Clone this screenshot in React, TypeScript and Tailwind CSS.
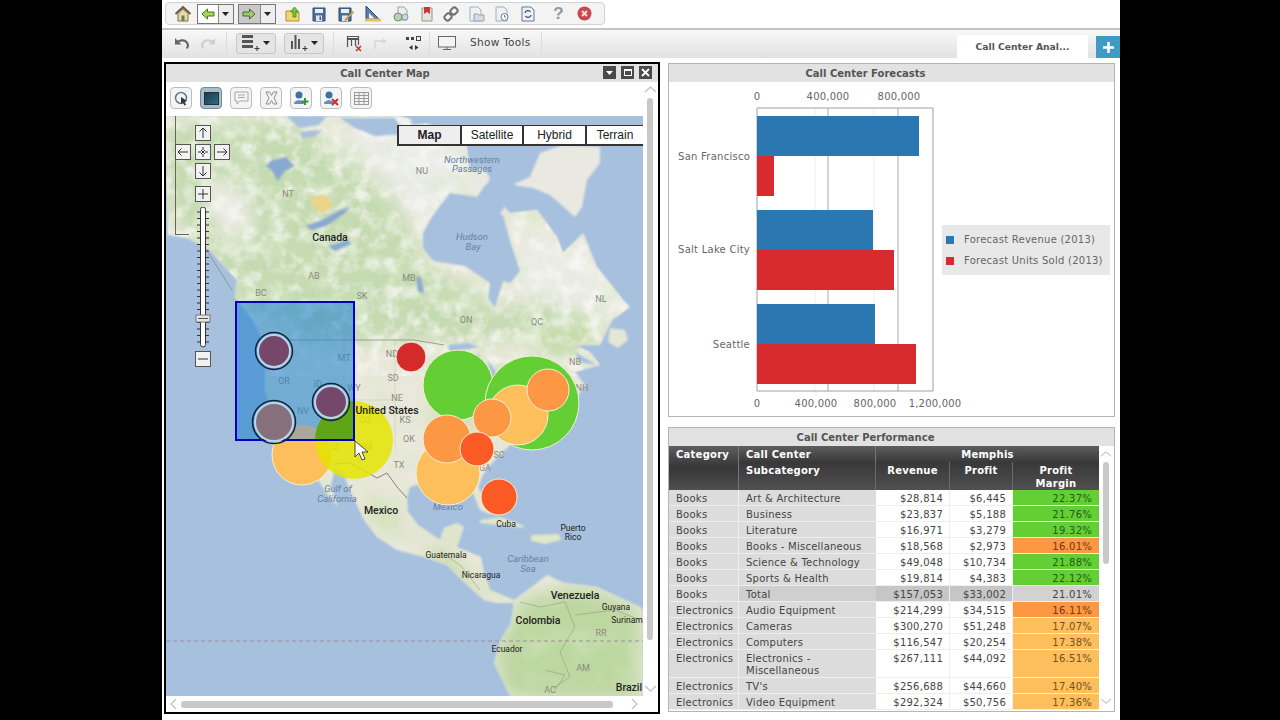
import React from 'react';

const VERDANA = "font-['DejaVu_Sans',Verdana,sans-serif]";

const Home = () => (
  <svg width="18" height="18" viewBox="0 0 18 18">
    <path d="M1.5 9 9 2l7.5 7" fill="none" stroke="#6b5a3a" strokeWidth="2" />
    <path d="M4 8.5V16h10V8.5L9 4z" fill="#e8d9a8" stroke="#7d6f4e" />
    <rect x="7.5" y="10.5" width="3" height="5.5" fill="#6d7f4a" />
  </svg>
);
const ArrowLeftIcon = () => (
  <svg width="14" height="12" viewBox="0 0 14 12">
    <path d="M1 6 6.5 1v3H13v4H6.500v3z" fill="#a8d84f" stroke="#3d7a22" />
  </svg>
);
const ArrowRightIcon = () => (
  <svg width="14" height="12" viewBox="0 0 14 12">
    <path d="M13 6 7.500 1v3H1v4h6.500v3z" fill="#a4c86a" stroke="#44692e" />
  </svg>
);
const Caret = ({ color = '#222' }: { color?: string }) => (
  <svg width="7" height="4" viewBox="0 0 7 4">
    <path d="M0 0h7L3.500 4z" fill={color} />
  </svg>
);
const FolderUp = () => (
  <svg width="16" height="16" viewBox="0 0 16 16">
    <path d="M1 5h5l1 1.500h7V15H1z" fill="#f1d66f" stroke="#b29434" />
    <path d="M9.500 1 13.500 5.500H11V11H8V5.500H5.500z" fill="#7cc242" stroke="#3f7f22" strokeWidth=".7" />
  </svg>
);
const Save = () => (
  <svg width="16" height="16" viewBox="0 0 16 16">
    <path d="M2 2h12v13H2z" fill="#4a7099" stroke="#2f4d6e" />
    <rect x="4" y="3" width="8" height="4" fill="#e8eef4" />
    <rect x="5" y="9.500" width="6" height="5.500" fill="#dfe5ec" />
    <rect x="8.500" y="10.500" width="1.500" height="3.500" fill="#33597f" />
  </svg>
);
const SaveAs = () => (
  <svg width="17" height="16" viewBox="0 0 17 16">
    <path d="M2 2h12v13H2z" fill="#4a7099" stroke="#2f4d6e" />
    <rect x="4" y="3" width="8" height="4" fill="#e8eef4" />
    <rect x="5" y="9.500" width="6" height="5.500" fill="#dfe5ec" />
    <path d="m15.500 5-6 7-1.500 2.500 2.500-1.500 6-6.500z" fill="#e9b949" stroke="#8d6a1c" strokeWidth=".6" />
  </svg>
);
const RulerIcon = () => (
  <svg width="18" height="17" viewBox="0 0 18 17">
    <path d="M2 1v13h13z" fill="#5b7db0" stroke="#2d4a78" />
    <path d="M5 8v5.500h5.500z" fill="#f2f2f2" />
    <rect x="1" y="13.500" width="16" height="3" fill="#e6c25a" />
  </svg>
);
const Recycle = () => (
  <svg width="18" height="16" viewBox="0 0 18 16">
    <path d="M6 1h6l3 3v10H6z" fill="#e8ecf0" stroke="#9aa3ad" />
    <circle cx="6" cy="11" r="4" fill="#b9cfb0" stroke="#7a8f76" />
    <circle cx="13" cy="11" r="3" fill="#cfd6dc" stroke="#8d99a5" />
  </svg>
);
const Bookmark = () => (
  <svg width="14" height="16" viewBox="0 0 14 16">
    <path d="M2 2h10v13H2z" fill="#e6e2dc" stroke="#9a948c" />
    <path d="M4 1h6v7L7 6 4 8z" fill="#c8373a" />
  </svg>
);
const Chain = () => (
  <svg width="16" height="16" viewBox="0 0 16 16" fill="none" stroke="#6c7075" strokeWidth="2">
    <rect x="8" y="1.500" width="6" height="7" rx="2.500" transform="rotate(45 11 5)" />
    <rect x="2" y="7.500" width="6" height="7" rx="2.500" transform="rotate(45 5 11)" />
  </svg>
);
const PageFolder = () => (
  <svg width="17" height="16" viewBox="0 0 17 16">
    <path d="M2 1h8l3 3v11H2z" fill="#eef1f4" stroke="#a6adb5" />
    <path d="M6 8h4l1 1h5v6H6z" fill="#d5dbe2" stroke="#99a2ac" />
  </svg>
);
const PageClock = () => (
  <svg width="16" height="16" viewBox="0 0 16 16">
    <path d="M2 1h8l3 3v11H2z" fill="#eef1f4" stroke="#a6adb5" />
    <circle cx="10.500" cy="11" r="3.500" fill="#fff" stroke="#6b7a8c" />
    <path d="M10.500 9v2h1.500" stroke="#6b7a8c" fill="none" />
  </svg>
);
const PageRefresh = () => (
  <svg width="14" height="16" viewBox="0 0 14 16">
    <path d="M1 1h9l3 3v11H1z" fill="#eef1f4" stroke="#6e7882" />
    <path d="M4 7a3 3 0 0 1 5.500-1M10 9a3 3 0 0 1-5.500 1" stroke="#2d4f75" strokeWidth="1.300" fill="none" />
  </svg>
);
const HelpIcon = () => (
  <span className="font-['Liberation_Sans',sans-serif] text-[17px] font-bold leading-none text-[#8f9aa8]">?</span>
);
const CloseIcon = () => (
  <svg width="15" height="15" viewBox="0 0 15 15">
    <circle cx="7.500" cy="7.500" r="7" fill="#c8494d" />
    <path d="m5 5 5 5m0-5-5 5" stroke="#f5dcdc" strokeWidth="2" />
  </svg>
);
const Undo = ({ color }: { color: string }) => (
  <svg width="16" height="13" viewBox="0 0 16 13" fill="none">
    <path d="M3 5.500c3-3.500 10-3 11 3l-1 3" stroke={color} strokeWidth="2.200" />
    <path d="M1 1v6.500h6.500z" fill={color} />
  </svg>
);
const Redo = ({ color }: { color: string }) => (
  <svg width="16" height="13" viewBox="0 0 16 13" fill="none">
    <path d="M13 5.500c-3-3.500-10-3-11 3l1 3" stroke={color} strokeWidth="2.200" />
    <path d="M15 1v6.500H8.500z" fill={color} />
  </svg>
);
const RowsAdd = () => (
  <svg width="20" height="18" viewBox="0 0 20 18">
    <rect x="1" y="1" width="11" height="3" fill="#555" />
    <rect x="1" y="6" width="11" height="3" fill="#555" />
    <rect x="1" y="11" width="11" height="3" fill="#555" />
    <path d="M16 12v5M13.500 14.500h5" stroke="#333" />
  </svg>
);
const BarsAdd = () => (
  <svg width="20" height="18" viewBox="0 0 20 18">
    <rect x="2" y="7" width="2" height="8" fill="#555" />
    <rect x="5.500" y="1" width="2" height="14" fill="#555" />
    <rect x="9" y="5" width="2" height="10" fill="#555" />
    <path d="M16 12v5M13.500 14.500h5" stroke="#333" />
  </svg>
);
const TableRemove = () => (
  <svg width="17" height="17" viewBox="0 0 17 17">
    <path d="M1 1.500h11M1.500 1v11M5.500 3v8M9.500 3v8M12.500 1v9" stroke="#555" strokeWidth="1.200" fill="none" />
    <path d="M1 4h11" stroke="#555" strokeWidth="2" />
    <path d="m10 11 5 5m0-5-5 5" stroke="#cf2e2e" strokeWidth="1.600" />
  </svg>
);
const Route = () => (
  <svg width="16" height="14" viewBox="0 0 16 14" fill="none" stroke="#d4d4d4" strokeWidth="1.300">
    <path d="M2 13V5h10M10 3l2.500 2L10 7" />
  </svg>
);
const Swap = () => (
  <svg width="17" height="16" viewBox="0 0 17 16">
    <rect x="1" y="2" width="3" height="3" fill="#444" />
    <rect x="6" y="2" width="3" height="3" fill="#444" />
    <rect x="11.500" y="1.500" width="4" height="4" fill="none" stroke="#444" />
    <path d="M7.500 10v5L4 12.500zM10 10v5l3.500-2.500z" fill="#333" />
  </svg>
);
const Monitor = () => (
  <svg width="18" height="15" viewBox="0 0 18 15">
    <rect x=".5" y=".5" width="17" height="10.500" fill="#f4f4f4" stroke="#666" />
    <path d="M9 11v2M5 13.500h8" stroke="#666" />
  </svg>
);

const Sep = () => <div className="mx-[1px] h-[22px] w-px bg-[#dcdcdc]" />;

// top icon strip, centered in fixed slots so they line up with the picture
const slot = (node: React.ReactNode, w: string) => (
  <div className={`flex items-center justify-center ${w}`}>{node}</div>
);

const TopBar = () => (
  <div className="flex h-[28px] items-start pl-[3px] pt-[2px]">
    <div className="flex h-[23px] w-[440px] items-center rounded-sm border border-[#d2d2d2] bg-[#f3f3f3] pl-[4px]">
      {slot(<Home />, 'w-[26px]')}
      <div className="ml-[1px] flex h-[20px] w-[37px] border border-[#777]">
        <div className="flex w-[21px] items-center justify-center bg-white"><ArrowLeftIcon /></div>
        <div className="flex w-[16px] items-center justify-center border-l border-[#888] bg-[#eee]"><Caret /></div>
      </div>
      <div className="ml-[4px] flex h-[20px] w-[38px] border border-[#777]">
        <div className="flex w-[22px] items-center justify-center bg-[#c9c9c9]"><ArrowRightIcon /></div>
        <div className="flex w-[16px] items-center justify-center border-l border-[#888] bg-[#eee]"><Caret /></div>
      </div>
      {slot(<FolderUp />, 'ml-[4px] w-[26px]')}
      {slot(<Save />, 'w-[26px]')}
      {slot(<SaveAs />, 'w-[26px]')}
      {slot(<RulerIcon />, 'ml-[1px] w-[28px]')}
      {slot(<Recycle />, 'w-[28px]')}
      {slot(<Bookmark />, 'w-[23px]')}
      {slot(<Chain />, 'w-[26px]')}
      {slot(<PageFolder />, 'w-[25px]')}
      {slot(<PageClock />, 'w-[26px]')}
      {slot(<PageRefresh />, 'w-[26px]')}
      {slot(<HelpIcon />, 'ml-[3px] w-[29px]')}
      {slot(<CloseIcon />, 'w-[22px]')}
    </div>
  </div>
);

const SplitBtn = ({ children }: { children: React.ReactNode }) => (
  <div className="flex h-[21px] w-[40px] items-center justify-between rounded-[3px] border border-[#c8c8c8] bg-[#e4e4e4] pl-[4px] pr-[5px]">
    {children}
    <Caret />
  </div>
);

const SecondBar = () => (
  <div className="flex h-[30px] items-center border-t-2 border-[#c4c4c4] bg-gradient-to-b from-[#f8f8f8] to-[#e2e2e2] pb-[2px] pl-[11px]">
    <div className="flex w-[18px] justify-center"><Undo color="#666" /></div>
    <div className="ml-[8px] flex w-[18px] justify-center"><Redo color="#d0d0d0" /></div>
    <div className="ml-[8px] mr-[8px]"><Sep /></div>
    <SplitBtn><RowsAdd /></SplitBtn>
    <div className="ml-[8px]"><SplitBtn><BarsAdd /></SplitBtn></div>
    <div className="ml-[8px] mr-[11px]"><Sep /></div>
    <TableRemove />
    <div className="ml-[10px]"><Route /></div>
    <div className="ml-[16px]"><Swap /></div>
    <div className="ml-[6px] mr-[7px]"><Sep /></div>
    <Monitor />
    <span className={`ml-[14px] text-[10.5px] tracking-[0.3px] text-[#444] ${VERDANA}`}>Show Tools</span>
    <div className="ml-[9px]"><Sep /></div>
    <div className="flex-1" />
    <div className={`mt-[8px] flex h-[24px] w-[131px] items-center justify-center bg-white text-[9.2px] font-bold text-[#555] ${VERDANA}`}>Call Center Anal...</div>
    <div className="ml-[8px] mt-[8px] flex h-[22px] w-[24px] items-center justify-center bg-[#3f9bc4]">
      <svg width="11" height="11" viewBox="0 0 11 11"><path d="M5.500 0v11M0 5.500h11" stroke="#fff" strokeWidth="2.500" /></svg>
    </div>
  </div>
);

const ToolBtn = ({ children, active }: { children: React.ReactNode; active?: boolean }) => (
  <div className={`flex h-[22px] w-[22px] items-center justify-center rounded-[4px] border ${active ? 'border-[#6f8b9c] bg-[#a9bcc8]' : 'border-[#bdbdbd] bg-[#f4f4f4]'}`}>
    {children}
  </div>
);

const MapTools = () => (
  <div className="flex h-[33px] items-center gap-[8px] pl-[4px]">
    <ToolBtn>
      <svg width="15" height="15" viewBox="0 0 15 15" fill="none">
        <circle cx="7" cy="7" r="5.500" stroke="#5d7b91" strokeWidth="1.500" />
        <path d="M7 6l6 4-2.500.5L12 14l-1.500.5-1.500-3L7 13z" fill="#333" />
      </svg>
    </ToolBtn>
    <ToolBtn active>
      <div className="h-[13px] w-[15px] border border-[#22333f] bg-gradient-to-br from-[#1d3a4d] to-[#2a6e80]" />
    </ToolBtn>
    <ToolBtn>
      <svg width="15" height="14" viewBox="0 0 15 14" fill="none" stroke="#a8a8a8">
        <path d="M1 1h13v9H6l-3 3v-3H1z" />
        <path d="M4 4h7M4 6.500h7" />
      </svg>
    </ToolBtn>
    <ToolBtn>
      <svg width="13" height="14" viewBox="0 0 13 14" fill="none" stroke="#8b8b8b">
        <path d="M1 1h3.500l2 3.500 2-3.500H12L9 7l3 6H8.500l-2-3.500-2 3.500H1l3-6z" />
      </svg>
    </ToolBtn>
    <ToolBtn>
      <svg width="16" height="16" viewBox="0 0 16 16">
        <circle cx="6" cy="5" r="3.500" fill="#3d6fa3" />
        <path d="M1 14c0-5 10-5 10 0z" fill="#5f8fc0" />
        <path d="M12 8v7M8.500 11.500h7" stroke="#2f9a3a" strokeWidth="2" />
      </svg>
    </ToolBtn>
    <ToolBtn>
      <svg width="16" height="16" viewBox="0 0 16 16">
        <circle cx="6" cy="5" r="3.500" fill="#3d6fa3" />
        <path d="M1 14c0-5 10-5 10 0z" fill="#5f8fc0" />
        <path d="m9 9 6 6m0-6-6 6" stroke="#d02c2c" strokeWidth="2" />
      </svg>
    </ToolBtn>
    <ToolBtn>
      <svg width="15" height="13" viewBox="0 0 15 13" fill="none" stroke="#9a9a9a">
        <rect x=".5" y=".5" width="14" height="12" />
        <path d="M.5 3.500h14M.5 6.500h14M.5 9.500h14M5 .5v12M10 .5v12" />
      </svg>
    </ToolBtn>
  </div>
);

const NavBtn = ({ children, className = '' }: { children: React.ReactNode; className?: string }) => (
  <div className={`absolute flex h-[16px] w-[16px] items-center justify-center border border-[#555] bg-[#f2f2f2] ${className}`}>
    <svg width="12" height="12" viewBox="0 0 12 12" fill="none" stroke="#333">{children}</svg>
  </div>
);

const NavControl = () => (
  <>
    <div className="absolute left-[9px] top-0 h-[119px] w-[14px] border-b border-l border-[#666]" />
    <NavBtn className="left-[29px] top-[9px]"><path d="M6 11V1M2.500 4.500 6 1l3.500 3.500" /></NavBtn>
    <NavBtn className="left-[9px] top-[28px]"><path d="M11 6H1M4.500 2.500 1 6l3.500 3.500" /></NavBtn>
    <NavBtn className="left-[29px] top-[28px]"><path d="M6 1v3M6 8v3M1 6h3M8 6h3M4 4l4 4M8 4l-4 4" /></NavBtn>
    <NavBtn className="left-[48px] top-[28px]"><path d="M1 6h10M7.500 2.500 11 6l-3.500 3.500" /></NavBtn>
    <NavBtn className="left-[29px] top-[47px]"><path d="M6 1v10M2.500 7.500 6 11l3.500-3.500" /></NavBtn>
    <NavBtn className="left-[29px] top-[70px]"><path d="M6 1v10M1 6h10" /></NavBtn>
    <svg className="absolute left-[29px] top-[91px]" width="16" height="141" viewBox="0 0 16 141">
      {Array.from({ length: 21 }).map((_, i) => (
        <path key={i} d={`M2 ${5 + i * 6.500}h12`} stroke="#333" strokeWidth="1" />
      ))}
      <rect x="5.500" y="0" width="5" height="140" rx="2.500" fill="#fff" stroke="#333" />
      <rect x="1" y="108" width="14" height="7" fill="#e6e6e6" stroke="#777" />
      <path d="M3 111.500h10" stroke="#555" />
    </svg>
    <NavBtn className="left-[29px] top-[235px]"><path d="M1 6h10" /></NavBtn>
  </>
);

const MAP_TYPES = ['Map', 'Satellite', 'Hybrid', 'Terrain'];

const MapTypeBar = () => (
  <div className="absolute left-[231px] top-[9px] grid h-[19px] w-[246px] grid-cols-[63px_62px_63px_58px] font-['Liberation_Sans',sans-serif] text-[12px] text-[#222]">
    {MAP_TYPES.map((t, i) => (
      <div
        key={t}
        className={`flex items-center justify-center border-b-2 border-l-2 border-t border-[#333] ${i === 0 ? 'bg-[#eeeeee] font-bold' : 'bg-white'}`}
      >
        {t}
      </div>
    ))}
  </div>
);

type MapLabel = { x: number; y: number; t: string; k: 'major' | 'country' | 'small' | 'state' | 'sea' };
const LABELS: MapLabel[] = [
  { x: 330, y: 241, t: 'Canada', k: 'country' },
  { x: 381, y: 514, t: 'Mexico', k: 'country' },
  { x: 506, y: 527, t: 'Cuba', k: 'small' },
  { x: 573, y: 531, t: 'Puerto', k: 'small' },
  { x: 573, y: 540, t: 'Rico', k: 'small' },
  { x: 446, y: 558, t: 'Guatemala', k: 'small' },
  { x: 481, y: 578, t: 'Nicaragua', k: 'small' },
  { x: 575, y: 599, t: 'Venezuela', k: 'major' },
  { x: 538, y: 624, t: 'Colombia', k: 'major' },
  { x: 616, y: 610, t: 'Guyana', k: 'small' },
  { x: 627, y: 623, t: 'Surinam', k: 'small' },
  { x: 507, y: 652, t: 'Ecuador', k: 'small' },
  { x: 629, y: 691, t: 'Brazil', k: 'major' },
  { x: 288, y: 197, t: 'NT', k: 'state' },
  { x: 422, y: 174, t: 'NU', k: 'state' },
  { x: 409, y: 281, t: 'MB', k: 'state' },
  { x: 601, y: 302, t: 'NL', k: 'state' },
  { x: 314, y: 279, t: 'AB', k: 'state' },
  { x: 261, y: 296, t: 'BC', k: 'state' },
  { x: 362, y: 299, t: 'SK', k: 'state' },
  { x: 466, y: 323, t: 'ON', k: 'state' },
  { x: 537, y: 325, t: 'QC', k: 'state' },
  { x: 575, y: 365, t: 'NB', k: 'state' },
  { x: 582, y: 391, t: 'NH', k: 'state' },
  { x: 344, y: 361, t: 'MT', k: 'state' },
  { x: 284, y: 384, t: 'OR', k: 'state' },
  { x: 318, y: 387, t: 'ID', k: 'state' },
  { x: 354, y: 391, t: 'WY', k: 'state' },
  { x: 303, y: 414, t: 'NV', k: 'state' },
  { x: 365, y: 423, t: 'CO', k: 'state' },
  { x: 397, y: 401, t: 'NE', k: 'state' },
  { x: 393, y: 381, t: 'SD', k: 'state' },
  { x: 392, y: 357, t: 'ND', k: 'state' },
  { x: 405, y: 423, t: 'KS', k: 'state' },
  { x: 409, y: 442, t: 'OK', k: 'state' },
  { x: 399, y: 468, t: 'TX', k: 'state' },
  { x: 499, y: 458, t: 'SC', k: 'state' },
  { x: 485, y: 471, t: 'GA', k: 'state' },
  { x: 365, y: 450, t: 'NM', k: 'state' },
  { x: 334, y: 450, t: 'AZ', k: 'state' },
  { x: 583, y: 671, t: 'AM', k: 'state' },
  { x: 550, y: 693, t: 'AC', k: 'state' },
  { x: 601, y: 636, t: 'RR', k: 'state' },
  { x: 472, y: 163, t: 'Northwestern', k: 'sea' },
  { x: 472, y: 172, t: 'Passages', k: 'sea' },
  { x: 472, y: 240, t: 'Hudson', k: 'sea' },
  { x: 473, y: 250, t: 'Bay', k: 'sea' },
  { x: 338, y: 492, t: 'Gulf of', k: 'sea' },
  { x: 337, y: 502, t: 'California', k: 'sea' },
  { x: 528, y: 562, t: 'Caribbean', k: 'sea' },
  { x: 528, y: 572, t: 'Sea', k: 'sea' },
  { x: 448, y: 510, t: 'Mexico', k: 'sea' },
];

const labelClass: Record<MapLabel['k'], string> = {
  country: "font-['Roboto',sans-serif] text-[10.500px] font-medium fill-[#222]",
  major: "font-['Roboto',sans-serif] text-[10.500px] font-medium fill-[#222]",
  small: "font-['Roboto',sans-serif] text-[8.500px] fill-[#222]",
  state: "font-['Roboto',sans-serif] text-[9px] fill-[#8a8a80]",
  sea: "font-['Roboto',sans-serif] text-[9.500px] italic fill-[#66809f]",
};

const Bubble = ({ x, y, r, fill }: { x: number; y: number; r: number; fill: string }) => (
  <circle cx={x} cy={y} r={r} fill={fill} stroke="#f4f0d8" strokeWidth="1" />
);

const Selected = ({ x, y, r, fill }: { x: number; y: number; r: number; fill: string }) => (
  <g>
    <circle cx={x} cy={y} r={r} fill={fill} stroke="#b5d5ea" strokeWidth="2" />
    <circle cx={x} cy={y} r={r + 2.500} fill="none" stroke="#14213d" strokeWidth="1.500" />
  </g>
);

const LAND =
  'M165 116H400l65 19 5 35 40 43 27-3 20 27 6 16 20-20 14 34 26 33 7 7-18 13-12 25h-25l15 7 10 13-25 7 10 13-10 15-30 25-20 5-20 20-15 15-7 10-5 12 10 18 4 10-12-5-10-25-18-2-24-1-18 5-3 11 1 14 10 13 22 15 4-12 13-5 7 4-7 20 24 10 3 15 6 18 24 10 23-17 10-8 17 8 33 4 43 20 3 3v87H511l-17-34 7-23 10-17 3-20h-17l-13-3-20-18-17-17-23-8-27-7-20-13-13-17-12-25-9-22-8-5-4 17 7 22-10-12-10-15-5-8-20-17-15-25-7-20-6-20v-45l-12-25-18-23 2-17-27-30-23-12-19-3z';

const MapCanvas = () => (
  <svg className="absolute inset-0" width="477" height="581" viewBox="166 116 477 581">
    <defs>
      <filter id="soft"><feGaussianBlur stdDeviation="1.100" /></filter>
      <filter id="softer"><feGaussianBlur stdDeviation="9" /></filter>
      {/* terrain mottling */}
      <filter id="mottleWhite" x="0" y="0" width="100%" height="100%">
        <feTurbulence type="fractalNoise" baseFrequency="0.07" numOctaves="4" seed="7" />
        <feColorMatrix values="0 0 0 0 .96  0 0 0 0 .96  0 0 0 0 .94  2.600 0 0 0 -1.050" />
      </filter>
      <filter id="mottleGreen" x="0" y="0" width="100%" height="100%">
        <feTurbulence type="fractalNoise" baseFrequency="0.035" numOctaves="3" seed="3" />
        <feColorMatrix values="0 0 0 0 .66  0 0 0 0 .8  0 0 0 0 .55  0 2.200 0 0 -.95" />
      </filter>
      <clipPath id="landClip"><path d={LAND} /></clipPath>
      <clipPath id="boxClip"><rect x="237" y="303" width="116" height="136" /></clipPath>
    </defs>
    <rect x="166" y="116" width="477" height="581" fill="#a7c0de" />
    <g filter="url(#soft)">
      <path d={LAND} fill="#e9e8da" />
    </g>
    <g clipPath="url(#landClip)">
      <g filter="url(#softer)">
        <path d="M166 125l120-5 40 20 70 60 30 65 40 20 30 25 60-10 45 30-20 15-60-10-40 10-50-5-130 5-70-50-30-50-35-40z" fill="#c4dab0" />
        <path d="M205 175l35 12 15 40-20 20-25-35z" fill="#f0eee8" />
        <path d="M345 125l120 10 0 70-50 10-35-50-30-25z" fill="#ececea" />
        <path d="M515 215l80 50 35 45-45 5-60-20z" fill="#ecece6" />
        <path d="M530 330l55-20 20 20-30 25-30 5z" fill="#c6dbaa" />
        <path d="M440 365l30 5 60-5 15 25-50 30-40 25-25-30z" fill="#d3e2bb" />
        <path d="M420 545l30 10 20 25 30 20-30-10-30-20zM445 530l15-5-5 20z" fill="#bfd9a2" />
        <path d="M360 495l30 10 20 30-30-5z" fill="#d2e0b6" />
        <path d="M520 600l60-15 60 25v90H505l-10-45z" fill="#bdd7a0" />
      </g>
      <rect x="166" y="116" width="477" height="260" filter="url(#mottleWhite)" opacity=".75" />
      <rect x="166" y="116" width="477" height="581" filter="url(#mottleGreen)" opacity=".45" />
      <path d="M310 197l14-3 9 10-8 9-10-3z" fill="#ead48a" filter="url(#soft)" />
    </g>
    <g filter="url(#soft)">
      <path d="M512 185l18-8 10-24 23-8 37 2v16l-13 17-5 27-7 10-25-22-17-7z" fill="#e9e9e2" />
      <path d="M470 172l12-6 8 12-6 14-14-2z" fill="#e9e9e2" />
      <path d="M610 328l15 2 3 10-10 8-10-6z" fill="#e4e6d6" />
      <path d="M480 520l20-3 22 8 3 3-20-2-25-3zM531 535l28-1 2 6-16 4-14-3z" fill="#dfe7c8" />
      <path d="M423 233l10-18 17-22 27 4 13 18h13l7 26 10 30-10 12-7-2-8 27-7-10 2-15-25-17-32-5-10-13z" fill="#a7c0de" />
      <path d="M470 140l40-2 5 47-15 30h-10l-13-18 8-12 13-5-8-15-15 5z" fill="#a7c0de" />
      <path d="M287 116h40l-8 9-20 3zM340 118h55l10 16-30 2-20-8zM410 116h18l-4 8-12 1zM535 116h20l-8 10-12-2zM300 132l22-2-8 7-12 1z" fill="#a7c0de" />
    </g>
    <g filter="url(#soft)" fill="#8aa9d0">
      <path d="M272 160l14-3 8 9-10 6-6 9-6-10-6-5z" />
      <path d="M306 226l18-7 16-9 10-3-6 7-18 12-14 4z" />
      <path d="M328 246l20-6 3 4-16 7zM416 276l5 2 3 16-6-3z" />
      <path d="M448 345l20-2 12 4-18 3-12 3zM478 352l7 20-6 6-3-16zM487 360l8 10 5 15-8-8zM500 383l18-8-2 5-14 6z" fill="#a7c0de" />
      <path d="M575 352l22 13-18-3z" fill="#a7c0de" />
    </g>
    <g fill="none" stroke="#8d8a7c" strokeWidth=".8">
      <path d="M200 240l32 50M264 340h150l30 5" />
      <path d="M333 464l17-1 13 7 14 8 10-5 10 14 10 11" stroke="#6a675a" />
      <path d="M520 602l20 5 25-5 10 25-15 25 10 25-15 10M575 615l40-5 25 10M555 690l10-15-20-5" strokeOpacity=".6" />
      <path d="M445 555l15 10 20 25" strokeOpacity=".6" />
      <path d="M344 340v60M395 340v110M310 400h90" strokeOpacity=".25" />
    </g>
    <path d="M166 641H643" stroke="#9d8f98" strokeWidth="1" strokeDasharray="4 3" />
    {LABELS.map((l) => (
      <text key={l.t + l.x} x={l.x} y={l.y} textAnchor="middle" className={labelClass[l.k]}>{l.t}</text>
    ))}
    <Bubble x={458} y={385} r={35} fill="#63cf35" />
    <Bubble x={532} y={403} r={47} fill="#63cf35" />
    <Bubble x={518} y={415} r={30} fill="#fdbe5c" />
    <Bubble x={548} y={390} r={21} fill="#fc9744" />
    <Bubble x={492} y={418} r={19} fill="#fc9744" />
    <Bubble x={448} y={473} r={32} fill="#fdbe5c" />
    <Bubble x={447} y={439} r={24} fill="#fc9744" />
    <Bubble x={477} y={449} r={17} fill="#fc5a24" />
    <Bubble x={499} y={497} r={18} fill="#fc5a24" />
    <Bubble x={411} y={357} r={15} fill="#d42a2a" />
    <Bubble x={302} y={455} r={30} fill="#fdbe5c" />
    <circle cx={354} cy={440} r={39} fill="#e4e400" opacity=".85" />
    <rect x="236" y="302" width="118" height="138" fill="#2685d0" fillOpacity=".6" stroke="#0000c4" strokeWidth="2" />
    <g clipPath="url(#boxClip)">
      <circle cx={302} cy={455} r={30} fill="#aaa79c" />
      <circle cx={354} cy={440} r={39} fill="#5fa516" />
    </g>
    <Selected x={274} y={351} r={16} fill="#75476b" />
    <Selected x={331} y={402} r={16} fill="#75476b" />
    <Selected x={274} y={422} r={19} fill="#86707c" />
    <text x={387} y={414} textAnchor="middle" className={labelClass.country}>United States</text>
    <path d="M355 441v16l4-4 3 7 3-1-3-7h6z" fill="#fff" stroke="#222" strokeWidth=".8" />
  </svg>
);

const MapPanel = () => (
  <div className="flex h-[652px] w-[496px] flex-col border-2 border-black bg-white">
    <div className={`relative flex h-[18px] items-center justify-center bg-[#e2e2e2] pr-[54px] text-[10px] font-bold text-[#555] ${VERDANA}`}>
      Call Center Map
      <div className="absolute right-[6px] top-[2px] flex gap-[5px]">
        <div className="flex h-[13px] w-[13px] items-center justify-center bg-[#4a4a4a]"><Caret color="#fff" /></div>
        <div className="flex h-[13px] w-[13px] items-center justify-center bg-[#4a4a4a]"><div className="h-[7px] w-[8px] border border-t-2 border-white" /></div>
        <div className="flex h-[13px] w-[13px] items-center justify-center bg-[#4a4a4a]">
          <svg width="9" height="9" viewBox="0 0 9 9"><path d="m1 1 7 7m0-7-7 7" stroke="#fff" strokeWidth="1.800" /></svg>
        </div>
      </div>
    </div>
    <div className="flex min-h-0 flex-1">
      <div className="flex w-[477px] flex-col">
        <MapTools />
        <div className="relative mt-[1px] h-[581px] overflow-hidden">
          <MapCanvas />
          <NavControl />
          <MapTypeBar />
        </div>
      </div>
      <div className="relative flex-1">
        <svg className="absolute left-[1px] top-[4px]" width="13" height="7" viewBox="0 0 13 7" fill="none"><path d="m1 6 5.500-5L12 6" stroke="#c8c8c8" strokeWidth="1.500" /></svg>
        <div className="absolute bottom-[56px] left-[4px] top-[16px] w-[6px] rounded-[3px] bg-[#c8c8c8]" />
        <svg className="absolute bottom-[4px] left-[1px]" width="13" height="7" viewBox="0 0 13 7" fill="none"><path d="m1 1 5.500 5L12 1" stroke="#c8c8c8" strokeWidth="1.500" /></svg>
      </div>
    </div>
    <div className="flex h-[16px] items-center pl-[4px]">
      <svg width="7" height="12" viewBox="0 0 7 12" fill="none"><path d="M6 1 1 6l5 5" stroke="#c8c8c8" strokeWidth="1.500" /></svg>
      <div className="ml-[4px] h-[7px] w-[432px] rounded-[3px] bg-[#c8c8c8]" />
      <svg className="ml-[18px]" width="7" height="12" viewBox="0 0 7 12" fill="none"><path d="m1 1 5 5-5 5" stroke="#c8c8c8" strokeWidth="1.500" /></svg>
    </div>
  </div>
);

const ForecastChart = () => (
  <svg className={`shrink-0 overflow-visible ${VERDANA}`} width="273" height="335" viewBox="669 82 273 335">
    <path d="M815 108v283M874 108v283" stroke="#eeeeee" />
    <path d="M828 108v283M898 108v283" stroke="#a8a8a8" />
    <path d="M757 391V108H933V391H757" fill="none" stroke="#a0a0a0" />
    <rect x="757" y="116" width="162" height="40" fill="#2b77b2" />
    <rect x="757" y="156" width="17" height="40" fill="#d72b30" />
    <rect x="757" y="210" width="116" height="40" fill="#2b77b2" />
    <rect x="757" y="250" width="137" height="40" fill="#d72b30" />
    <rect x="757" y="304" width="118" height="40" fill="#2b77b2" />
    <rect x="757" y="344" width="159" height="40" fill="#d72b30" />
    <g className="fill-[#666] text-[10px] tracking-[0.2px]" textAnchor="middle">
      <text x="757" y="100">0</text>
      <text x="828" y="100">400,000</text>
      <text x="899" y="100">800,000</text>
      <text x="757" y="407">0</text>
      <text x="816" y="407">400,000</text>
      <text x="875" y="407">800,000</text>
      <text x="935" y="407">1,200,000</text>
    </g>
    <g className="fill-[#666] text-[10px] tracking-[0.25px]" textAnchor="end">
      <text x="750" y="160">San Francisco</text>
      <text x="750" y="253">Salt Lake City</text>
      <text x="750" y="348">Seattle</text>
    </g>
  </svg>
);

const ForecastPanel = () => (
  <div className="h-[354px] border border-[#b4b4b4] bg-white">
    <div className={`flex h-[18px] items-center justify-center bg-[#e2e2e2] pr-[52px] text-[10px] font-bold text-[#555] ${VERDANA}`}>Call Center Forecasts</div>
    <div className="flex items-start">
      <ForecastChart />
      <div className={`mt-[143px] flex h-[50px] w-[168px] flex-col justify-center gap-[9px] bg-[#e8e8e8] pl-[4px] text-[10px] tracking-[0.25px] text-[#666] ${VERDANA}`}>
        <div className="flex items-center gap-[10px] leading-[12px]"><span className="h-[8px] w-[8px] bg-[#2b77b2]" />Forecast Revenue (2013)</div>
        <div className="flex items-center gap-[10px] leading-[12px]"><span className="h-[8px] w-[8px] bg-[#d72b30]" />Forecast Units Sold (2013)</div>
      </div>
    </div>
  </div>
);

const GREEN = 'bg-[#63cf35] text-[#245c14]';
const ORANGE = 'bg-[#fc9744] text-[#7a3412]';
const AMBER = 'bg-[#fdbe5c] text-[#75501c]';
const TOTAL = 'bg-[#d2d2d2] text-[#444]';

type Row = { cat: string; sub: React.ReactNode; rev: string; profit: string; margin: string; color: string; total?: boolean; tall?: boolean };
const ROWS: Row[] = [
  { cat: 'Books', sub: 'Art & Architecture', rev: '$28,814', profit: '$6,445', margin: '22.37%', color: GREEN },
  { cat: 'Books', sub: 'Business', rev: '$23,837', profit: '$5,188', margin: '21.76%', color: GREEN },
  { cat: 'Books', sub: 'Literature', rev: '$16,971', profit: '$3,279', margin: '19.32%', color: GREEN },
  { cat: 'Books', sub: 'Books - Miscellaneous', rev: '$18,568', profit: '$2,973', margin: '16.01%', color: ORANGE },
  { cat: 'Books', sub: 'Science & Technology', rev: '$49,048', profit: '$10,734', margin: '21.88%', color: GREEN },
  { cat: 'Books', sub: 'Sports & Health', rev: '$19,814', profit: '$4,383', margin: '22.12%', color: GREEN },
  { cat: 'Books', sub: 'Total', rev: '$157,053', profit: '$33,002', margin: '21.01%', color: TOTAL, total: true },
  { cat: 'Electronics', sub: 'Audio Equipment', rev: '$214,299', profit: '$34,515', margin: '16.11%', color: ORANGE },
  { cat: 'Electronics', sub: 'Cameras', rev: '$300,270', profit: '$51,248', margin: '17.07%', color: AMBER },
  { cat: 'Electronics', sub: 'Computers', rev: '$116,547', profit: '$20,254', margin: '17.38%', color: AMBER },
  { cat: 'Electronics', sub: <>Electronics -<br />Miscellaneous</>, rev: '$267,111', profit: '$44,092', margin: '16.51%', color: AMBER, tall: true },
  { cat: 'Electronics', sub: "TV's", rev: '$256,688', profit: '$44,660', margin: '17.40%', color: AMBER },
  { cat: 'Electronics', sub: 'Video Equipment', rev: '$292,324', profit: '$50,756', margin: '17.36%', color: AMBER },
];

const HEAD1 = 'bg-gradient-to-b from-[#5e5e5e] to-[#3a3a3a]';
const HEAD2 = 'bg-gradient-to-b from-[#383838] to-[#505050]';

const PerfTable = () => (
  <div className={`grid w-[430px] grid-cols-[70px_137px_74px_63px_86px] text-[10px] leading-[12px] tracking-[0.25px] ${VERDANA}`}>
    <div className="row-span-2 border-r border-[#777] bg-gradient-to-b from-[#5e5e5e] via-[#363636] to-[#505050] px-[7px] pt-[3px] font-bold text-white">Category</div>
    <div className={`h-[16px] border-r border-[#777] px-[7px] pt-[3px] font-bold text-white ${HEAD1}`}>Call Center</div>
    <div className={`col-span-3 h-[16px] pt-[3px] text-center font-bold text-white ${HEAD1}`}>Memphis</div>
    <div className={`h-[28px] border-r border-[#6a6a6a] px-[7px] pt-[3px] font-bold text-white ${HEAD2}`}>Subcategory</div>
    <div className={`h-[28px] border-r border-[#6a6a6a] pt-[3px] text-center font-bold text-white ${HEAD2}`}>Revenue</div>
    <div className={`h-[28px] border-r border-[#6a6a6a] pt-[3px] text-center font-bold text-white ${HEAD2}`}>Profit</div>
    <div className={`h-[28px] pt-[2px] text-center font-bold leading-[13px] text-white ${HEAD2}`}>Profit<br />Margin</div>
    {ROWS.map((r, i) => {
      const h = r.tall ? 'h-[28px]' : 'h-[16px]';
      const valueBg = r.total ? 'bg-[#c6c6c6]' : 'bg-white';
      const labelBg = r.total ? 'bg-[#cfcfcf]' : 'bg-[#dcdcdc]';
      return (
        <React.Fragment key={i}>
          <div className={`${h} border-b border-r border-[#eeeeee] bg-[#dcdcdc] px-[7px] pt-[3px] text-[#444]`}>{r.cat}</div>
          <div className={`${h} border-b border-[#eeeeee] ${labelBg} px-[7px] pt-[3px] text-[#444]`}>{r.sub}</div>
          <div className={`${h} border-b border-r border-[#eeeeee] ${valueBg} pr-[6px] pt-[3px] text-right text-[#444]`}>{r.rev}</div>
          <div className={`${h} border-b border-r border-[#eeeeee] ${valueBg} pr-[6px] pt-[3px] text-right text-[#444]`}>{r.profit}</div>
          <div className={`${h} border-b border-[#eeeeee] ${r.color} pr-[7px] pt-[3px] text-right`}>{r.margin}</div>
        </React.Fragment>
      );
    })}
  </div>
);

const PerformancePanel = () => (
  <div className="h-[285px] border border-[#b4b4b4] bg-white">
    <div className={`flex h-[18px] items-center justify-center bg-[#e2e2e2] pr-[52px] text-[10px] font-bold text-[#555] ${VERDANA}`}>Call Center Performance</div>
    <div className="flex">
      <PerfTable />
      <div className="relative w-[15px]">
        <svg className="absolute left-[1px] top-[5px]" width="12" height="6" viewBox="0 0 12 6" fill="none"><path d="m1 5 5-4 5 4" stroke="#d0d0d0" strokeWidth="1.500" /></svg>
        <div className="absolute left-[4px] top-[16px] h-[102px] w-[6px] rounded-[3px] bg-[#c8c8c8]" />
        <svg className="absolute bottom-[6px] left-[1px]" width="12" height="6" viewBox="0 0 12 6" fill="none"><path d="m1 1 5 4 5-4" stroke="#d0d0d0" strokeWidth="1.500" /></svg>
      </div>
    </div>
  </div>
);

export default function App() {
  return (
    <div className="flex h-[720px] w-[1280px] overflow-hidden bg-black">
      <div className="ml-[162px] h-full w-[958px] bg-white">
        <TopBar />
        <SecondBar />
        <div className="flex items-start pl-[2px] pt-[4px]">
          <MapPanel />
          <div className="ml-[8px] flex w-[447px] flex-col gap-[10px] pt-[1px]">
            <ForecastPanel />
            <PerformancePanel />
          </div>
        </div>
      </div>
    </div>
  );
}
